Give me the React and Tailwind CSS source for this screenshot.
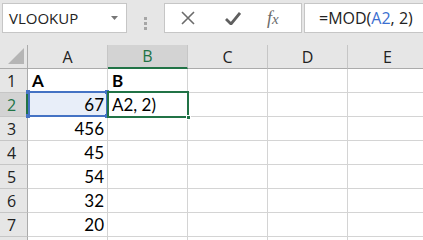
import React from 'react';

const cols = ['A', 'B', 'C', 'D', 'E'];
const rows = [
  { n: 1, a: 'A', b: 'B', head: true },
  { n: 2, a: '67', b: 'A2, 2)' },
  { n: 3, a: '456' },
  { n: 4, a: '45' },
  { n: 5, a: '54' },
  { n: 6, a: '32' },
  { n: 7, a: '20' },
  { n: 8, hidden: true },
];

const ui = { fontFamily: '"Open Sans", "Noto Sans", sans-serif' };
const cell = { fontFamily: 'Lato, "Open Sans", sans-serif' };

function FormulaBar() {
  return (
    <div className="flex h-[45px] bg-[#e6e6e6] pt-[3px]" style={ui}>
      <div className="ml-[2px] flex h-[30px] w-[125px] items-center justify-between border border-[#c6c6c6] bg-white pl-[6px] pr-[8px]">
        <span className="text-[15px] text-[#222]">VLOOKUP</span>
        <svg width="7" height="4" viewBox="0 0 7 4"><path d="M0 0h7L3.5 4z" fill="#777" /></svg>
      </div>
      <div className="flex w-[37px] flex-col items-center justify-center gap-[2px] pb-[2px]">
        <span className="h-[3px] w-[3px] bg-[#a6a6a6]" />
        <span className="h-[3px] w-[3px] bg-[#a6a6a6]" />
        <span className="h-[3px] w-[3px] bg-[#a6a6a6]" />
      </div>
      <div className="flex h-[30px] w-[138px] items-center border border-[#c6c6c6] bg-white">
        <svg className="ml-[16px]" width="14" height="14" viewBox="0 0 14 14">
          <path d="M1 1l12 12M13 1L1 13" stroke="#6b6b6b" strokeWidth="1.6" fill="none" />
        </svg>
        <svg className="ml-[30px]" width="16" height="13" viewBox="0 0 16 13">
          <path d="M1 7l5 5L15 1" stroke="#5f5f5f" strokeWidth="2.8" fill="none" />
        </svg>
        <span className="ml-[26px] text-[18px] italic text-[#6b6b6b]" style={{ fontFamily: '"Liberation Serif", serif' }}>
          f<span className="text-[15px]">x</span>
        </span>
      </div>
      <div className="ml-[2px] flex h-[30px] flex-1 items-center border border-r-0 border-[#c6c6c6] bg-white pl-[14px] text-[16px] text-[#222]">
        =MOD(<span className="text-[#3b6fd0]">A2</span>, 2)
      </div>
    </div>
  );
}

function ColumnHeaders() {
  return (
    <div className="flex h-[24px] bg-[#e6e6e6]" style={ui}>
      <div className="relative w-[28px] shrink-0 border-b border-r border-[#ababab]">
        <svg className="absolute left-[8px] top-[3px]" width="16" height="16" viewBox="0 0 16 16">
          <path d="M16 0v16H0z" fill="#b5b5b5" />
        </svg>
      </div>
      {cols.map((c) => (
        <div
          key={c}
          className={
            'flex w-[80px] shrink-0 items-center justify-center border-r text-[16px] ' +
            (c === 'B'
              ? 'border-b-2 border-r-[#c6c6c6] border-b-[#217346] bg-[#d3d3d3] text-[#217346]'
              : 'border-b border-r-[#c6c6c6] border-b-[#ababab] text-[#222]')
          }
        >
          {c}
        </div>
      ))}
    </div>
  );
}

function Row({ r }) {
  const sel = r.n === 2;
  return (
    <div className="flex h-[24px]">
      <div
        className={
          'flex w-[28px] shrink-0 items-center pl-[7px] text-[16px] ' +
          (sel
            ? 'border-b border-r-2 border-b-[#c6c6c6] border-r-[#217346] bg-[#d3d3d3] text-[#217346]'
            : 'border-b border-r border-b-[#c6c6c6] border-r-[#ababab] bg-[#e6e6e6] text-[#222]')
        }
        style={ui}
      >
        {r.hidden ? null : r.n}
      </div>
      {cols.map((c) => {
        const v = c === 'A' ? r.a : c === 'B' ? r.b : null;
        const right = c === 'A' && !r.head;
        return (
          <div
            key={c}
            className={
              'flex w-[80px] shrink-0 items-center border-b border-r border-[#d4d4d4] px-[4px] text-[17px] text-black ' +
              (right ? 'justify-end pr-[3px] ' : '') +
              (r.head ? 'font-bold ' : '') +
              (sel && c === 'A' ? 'bg-[#e8eef9]' : 'bg-white')
            }
            style={cell}
          >
            {v}
          </div>
        );
      })}
    </div>
  );
}

export default function App() {
  return (
    <div className="h-[240px] w-[423px] overflow-hidden bg-white">
      <FormulaBar />
      <ColumnHeaders />
      <div className="relative">
        {rows.map((r) => (
          <Row key={r.n} r={r} />
        ))}
        {/* reference highlight on A2 */}
        <div className="pointer-events-none absolute left-[28px] top-[22px] h-[26px] w-[80px] border-2 border-[#4472c4]" />
        <span className="absolute left-[26px] top-[21px] h-[4px] w-[4px] bg-[#4472c4]" />
        <span className="absolute left-[105px] top-[21px] h-[4px] w-[4px] bg-[#4472c4]" />
        <span className="absolute left-[26px] top-[45px] h-[4px] w-[4px] bg-[#4472c4]" />
        <span className="absolute left-[105px] top-[45px] h-[4px] w-[4px] bg-[#4472c4]" />
        {/* active cell B2 */}
        <div className="pointer-events-none absolute left-[107px] top-[22px] h-[27px] w-[82px] border-2 border-[#217346]" />
        <span className="absolute left-[186px] top-[46px] h-[5px] w-[5px] border border-white bg-[#217346]" />
      </div>
    </div>
  );
}
